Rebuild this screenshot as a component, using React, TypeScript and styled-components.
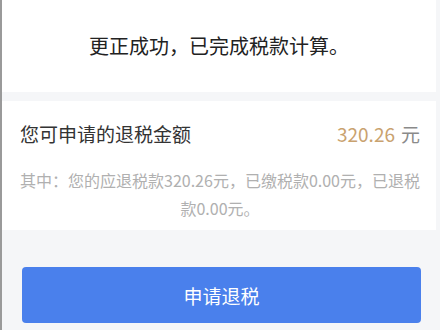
import { createGlobalStyle } from 'styled-components';
import styled from 'styled-components';

const GlobalStyle = createGlobalStyle`
  html, body {
    margin: 0;
    padding: 0;
    background: #f5f6f8;
  }
  * {
    box-sizing: border-box;
  }
`;

const Page = styled.div`
  width: 440px;
  height: 330px;
  overflow: hidden;
  display: flex;
  flex-direction: column;
  gap: 9px;
  padding: 0 4px 0 0;
  border-left: 2px solid #9a9a9a;
  background: #f5f6f8;
  font-family: 'Noto Sans CJK SC', 'Noto Sans', sans-serif;
`;

const Card = styled.section<{ $height: number }>`
  height: ${({ $height }) => $height}px;
  background: #ffffff;
`;

const NoticeCard = styled(Card)`
  display: flex;
  align-items: center;
  justify-content: center;
  padding-bottom: 2px;
`;

const Notice = styled.h1`
  margin: 0;
  font-size: 20px;
  font-weight: 400;
  color: #222;
`;

const RefundCard = styled(Card)`
  padding: 16px 16px 0 18px;
`;

const AmountRow = styled.div`
  display: flex;
  justify-content: space-between;
  align-items: center;
  height: 32px;
`;

const AmountLabel = styled.span`
  font-size: 19px;
  color: #333;
`;

const Amount = styled.span`
  font-size: 19px;
  color: #c9a26f;

  em {
    font-style: normal;
    color: #8a8a8a;
    margin-left: 6px;
  }
`;

const Detail = styled.p`
  margin: 17px 0 0;
  font-size: 16px;
  line-height: 28px;
  color: #b0b0b0;
  text-align: center;
`;

const ButtonArea = styled.div`
  padding: 28px 15px 0 20px;
`;

const ApplyButton = styled.button`
  width: 100%;
  height: 56px;
  border: none;
  border-radius: 4px;
  background: #4a80ec;
  color: #ffffff;
  font-family: inherit;
  font-size: 19px;
  cursor: pointer;
`;

const App = () => {
  return (
    <>
      <GlobalStyle />
      <Page>
        <NoticeCard $height={92}>
          <Notice>更正成功，已完成税款计算。</Notice>
        </NoticeCard>
        <RefundCard $height={129}>
          <AmountRow>
            <AmountLabel>您可申请的退税金额</AmountLabel>
            <Amount>
              320.26<em>元</em>
            </Amount>
          </AmountRow>
          <Detail>其中：您的应退税款320.26元，已缴税款0.00元，已退税款0.00元。</Detail>
        </RefundCard>
        <ButtonArea>
          <ApplyButton>申请退税</ApplyButton>
        </ButtonArea>
      </Page>
    </>
  );
};

export default App;
